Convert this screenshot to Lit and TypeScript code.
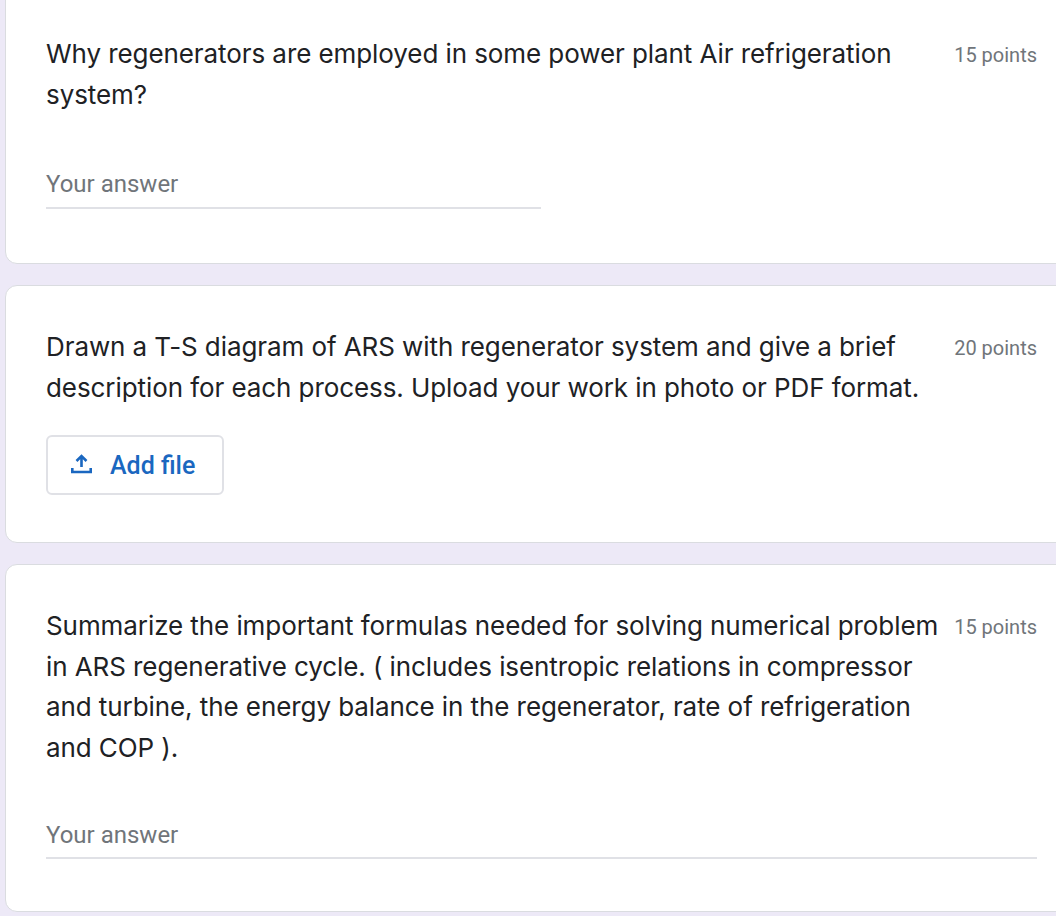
import { LitElement, html, css } from "lit";
import { customElement } from "lit/decorators.js";

interface Question {
  title: string[];
  points: string;
  kind: "short" | "wide" | "file";
}

const QUESTIONS: Question[] = [
  {
    title: [
      "Why regenerators are employed in some power plant Air refrigeration",
      "system?",
    ],
    points: "15 points",
    kind: "short",
  },
  {
    title: [
      "Drawn a T-S diagram of ARS with regenerator system and give a brief",
      "description for each process. Upload your work in photo or PDF format.",
    ],
    points: "20 points",
    kind: "file",
  },
  {
    title: [
      "Summarize the important formulas needed for solving numerical problem",
      "in ARS regenerative cycle. ( includes isentropic relations in compressor",
      "and turbine, the energy balance in the regenerator, rate of refrigeration",
      "and COP ).",
    ],
    points: "15 points",
    kind: "wide",
  },
];

@customElement("app-root")
export class AppRoot extends LitElement {
  static styles = css`
    :host {
      display: block;
      height: 916px;
      overflow: hidden;
      background: #ede9f7;
      font-family: Roboto, "Liberation Sans", sans-serif;
    }

    .list {
      display: flex;
      flex-direction: column;
      gap: 21px;
      margin-top: -40px;
      padding-left: 5px;
      margin-right: -20px;
    }

    .card {
      box-sizing: border-box;
      background: #fff;
      border: 1px solid #dadce0;
      border-radius: 12px;
      padding: 41px 38px 0 40px;
    }

    .card.short {
      padding-top: 73px;
      height: 304px;
    }

    .card.file {
      height: 258px;
    }

    .card.wide {
      height: 348px;
    }

    .head {
      display: flex;
      justify-content: space-between;
    }

    .title {
      font-family: Inter, Roboto, sans-serif;
      font-size: 26px;
      line-height: 40.5px;
      color: #202124;
      letter-spacing: -0.08px;
      white-space: nowrap;
    }

    .points {
      font-size: 20px;
      line-height: 42px;
      color: #70757a;
      white-space: nowrap;
    }

    .answer {
      font-size: 24px;
      color: #70757a;
      border-bottom: 2px solid #e0e1e6;
      line-height: 30px;
      padding-bottom: 8px;
    }

    .answer.short {
      width: 495px;
      margin-top: 54px;
    }

    .answer.wide {
      width: 991px;
      margin-top: 52px;
      padding-bottom: 7px;
    }

    .add-file {
      display: flex;
      align-items: center;
      gap: 13px;
      box-sizing: border-box;
      width: 178px;
      height: 60px;
      margin-top: 27px;
      padding-left: 20px;
      background: #fff;
      border: 2px solid #e0e1e6;
      border-radius: 6px;
      color: #1a67c0;
      font-size: 25px;
      font-weight: 500;
    }

    .add-file svg {
      width: 30px;
      height: 30px;
      fill: none;
      stroke: #1a67c0;
      stroke-width: 2.6;
      margin-left: -1px;
    }
  `;

  private renderBody(q: Question) {
    if (q.kind === "file") {
      return html`
        <div class="add-file">
          <svg viewBox="0 0 30 30">
            <path d="M14.5 17V6M9.5 11l5-5 5 5" />
            <path d="M5.3 18v4h18.4v-4" />
          </svg>
          <span>Add file</span>
        </div>
      `;
    }
    return html`<div class="answer ${q.kind}">Your answer</div>`;
  }

  protected render() {
    return html`
      <div class="list">
        ${QUESTIONS.map(
          (q) => html`
            <div class="card ${q.kind}">
              <div class="head">
                <div class="title">
                  ${q.title.map((line) => html`<div>${line}</div>`)}
                </div>
                <div class="points">${q.points}</div>
              </div>
              ${this.renderBody(q)}
            </div>
          `
        )}
      </div>
    `;
  }
}
